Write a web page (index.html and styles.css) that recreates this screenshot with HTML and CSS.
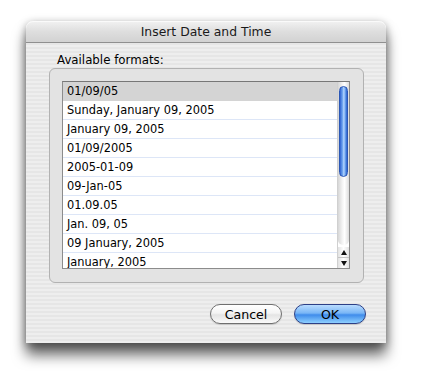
FILE: index.html
```html
<!DOCTYPE html>
<html lang="en">
<head>
    <meta charset="UTF-8">
    <title>Insert Date and Time</title>
    <link rel="stylesheet" href="styles.css">
</head>
<body>
    <!-- Dialog Window -->
    <div class="window">
        <div class="titlebar">Insert Date and Time</div>

        <div class="window-body">
            <div class="label">Available formats:</div>

            <!-- Group box with format list -->
            <div class="group">
                <div class="list">
                    <div class="rows">
                        <div class="row selected">01/09/05</div>
                        <div class="row">Sunday, January 09, 2005</div>
                        <div class="row">January 09, 2005</div>
                        <div class="row">01/09/2005</div>
                        <div class="row">2005-01-09</div>
                        <div class="row">09-Jan-05</div>
                        <div class="row">01.09.05</div>
                        <div class="row">Jan. 09, 05</div>
                        <div class="row">09 January, 2005</div>
                        <div class="row">January, 2005</div>
                    </div>
                    <div class="scrollbar">
                        <div class="track">
                            <div class="thumb"></div>
                        </div>
                        <div class="arrow up"></div>
                        <div class="arrow down"></div>
                    </div>
                </div>
            </div>

            <!-- Buttons -->
            <div class="actions">
                <button class="btn">Cancel</button>
                <button class="btn primary">OK</button>
            </div>
        </div>
    </div>
</body>
</html>
```
FILE: styles.css
```css
/* General Styles */
body {
    margin: 0;
    padding: 21px 0 40px 26px;
    background: #ffffff;
    font-family: "DejaVu Sans", Verdana, sans-serif;
    color: #000;
}

/* Window */
.window {
    width: 360px;
    height: 322px;
    border-radius: 7px 7px 0 0;
    background: repeating-linear-gradient(#eeeeee 0 2px, #e6e6e6 2px 4px);
    box-shadow: 0 12px 14px rgba(0, 0, 0, 0.6), 0 2px 8px rgba(0, 0, 0, 0.35);
    overflow: hidden;
}

.titlebar {
    height: 21px;
    line-height: 22px;
    text-align: center;
    font-size: 12.4px;
    color: #1a1a1a;
    background: linear-gradient(#f2f2f2, #dedede 50%, #d2d2d2);
    border-bottom: 1px solid #8f8f8f;
    border-radius: 7px 7px 0 0;
    box-shadow: inset 0 1px 0 #fafafa;
}

.window-body {
    padding: 9px 20px 0 23px;
}

.label {
    line-height: 16px;
    font-size: 11.8px;
    padding-left: 8px;
}

/* Group box */
.group {
    width: 288px;
    height: 188px;
    padding: 12px 13px 13px 12px;
    border: 1px solid #b2b2b2;
    border-radius: 6px;
    background: #e3e3e3;
}

/* List */
.list {
    display: flex;
    height: 186px;
    border: 1px solid #8c8c8c;
    border-top-color: #777;
    background: #fff;
    overflow: hidden;
}

.rows {
    flex: 1;
    overflow: hidden;
}

.row {
    height: 18px;
    line-height: 18px;
    padding-left: 4px;
    font-size: 11.4px;
    border-bottom: 1px solid #dde6f7;
    white-space: nowrap;
}

.row.selected {
    background: #d4d4d4;
    border-bottom-color: #d4d4d4;
}

/* Scrollbar */
.scrollbar {
    width: 11px;
    display: flex;
    flex-direction: column;
    border-left: 1px solid #d0d0d0;
}

.track {
    flex: 1;
    padding-top: 4px;
    background: linear-gradient(90deg, #d6d6d6, #f4f4f4 40%, #ffffff 60%, #dcdcdc);
    border-bottom-left-radius: 5px;
    border-bottom-right-radius: 5px;
}

.thumb {
    height: 89px;
    margin: 0 1px;
    border: 1px solid #2b57b5;
    border-radius: 5px;
    background: linear-gradient(90deg, #2f62d2, #6fa4ee 35%, #b6d7ff 55%, #6aa2ee 75%, #2a5ecb);
}

.arrow {
    height: 10px;
    position: relative;
    background: linear-gradient(90deg, #e2e2e2, #ffffff 50%, #e2e2e2);
}

.arrow.up {
    margin-top: 2px;
    border-bottom: 1px solid #c4c4c4;
}

.arrow::after {
    content: "";
    position: absolute;
    left: 3px;
    top: 3px;
    border-left: 3px solid transparent;
    border-right: 3px solid transparent;
}

.arrow.up::after {
    border-bottom: 5px solid #111;
}

.arrow.down::after {
    border-top: 5px solid #111;
}

/* Buttons */
.actions {
    display: flex;
    justify-content: flex-end;
    gap: 12px;
    margin-top: 21px;
}

.btn {
    width: 72px;
    height: 20px;
    padding: 0;
    border: 1px solid #6f6f6f;
    border-radius: 10px;
    font-family: "DejaVu Sans", Verdana, sans-serif;
    font-size: 12.6px;
    color: #000;
    background: linear-gradient(#ffffff, #f4f4f4 45%, #e4e4e4 55%, #fafafa);
    box-shadow: 0 1px 1px rgba(0, 0, 0, 0.15);
}

.btn.primary {
    border-color: #2c3f86;
    background: linear-gradient(#b9dcff, #79b6f6 45%, #3f8ceb 55%, #8ed0ff);
}
```
